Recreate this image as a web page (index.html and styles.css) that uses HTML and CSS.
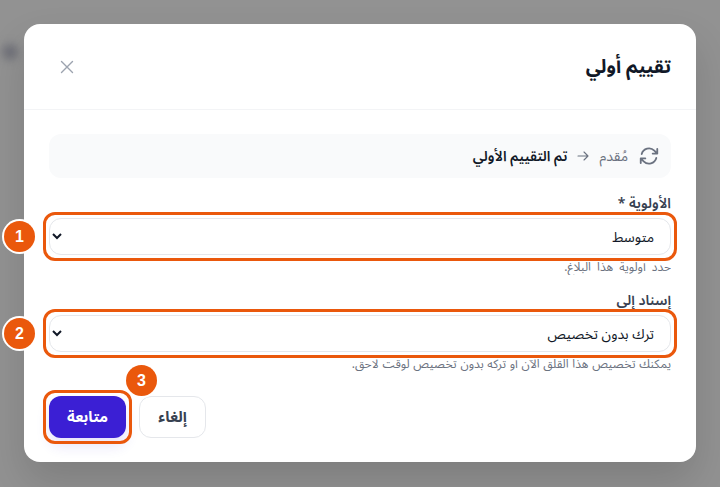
FILE: index.html
```html
<!DOCTYPE html>
<html lang="ar" dir="rtl">
<head>
<meta charset="utf-8">
<title>تقييم أولي</title>
<link rel="stylesheet" href="styles.css">
</head>
<body>
<div class="backdrop">
  <span class="blob"></span>
  <section class="modal">
    <header class="modal-head">
      <h2 class="title">تقييم أولي</h2>
      <button class="close" aria-label="إغلاق">
        <svg width="14" height="14" viewBox="0 0 14 14" fill="none" stroke="#9ca3af" stroke-width="1.4" stroke-linecap="round"><path d="M1.5 1.5l11 11M12.5 1.5l-11 11"/></svg>
      </button>
    </header>
    <div class="modal-body">
      <div class="steps">
        <svg class="refresh" width="22" height="22" viewBox="0 0 24 24" fill="none" stroke="#6b7280" stroke-width="2" stroke-linecap="round" stroke-linejoin="round"><path d="M16.023 9.348h4.992M2.985 19.644v-4.992m0 0h4.992m-4.993 0 3.181 3.183a8.25 8.25 0 0 0 13.803-3.7M4.031 9.865a8.25 8.25 0 0 1 13.803-3.7l3.181 3.182m0-4.991v4.99"/></svg>
        <span class="step-from">مُقدم</span>
        <svg class="arrow" width="12" height="12" viewBox="0 0 12 12" fill="none" stroke="#6b7280" stroke-width="1.1" stroke-linecap="round" stroke-linejoin="round"><path d="M1 6h10M7 2l4 4-4 4"/></svg>
        <span class="step-to">تم التقييم الأولي</span>
      </div>
      <div class="field">
        <label class="label">الأولوية *</label>
        <div class="ring ring-field">
          <select class="select"><option>متوسط</option></select>
          <span class="badge badge-side">1</span>
        </div>
        <p class="hint hint-wide">حدد أولوية هذا البلاغ.</p>
      </div>
      <div class="field">
        <label class="label">إسناد إلى</label>
        <div class="ring ring-field">
          <select class="select"><option>ترك بدون تخصيص</option></select>
          <span class="badge badge-side">2</span>
        </div>
        <p class="hint">يمكنك تخصيص هذا القلق الآن أو تركه بدون تخصيص لوقت لاحق.</p>
      </div>
      <div class="actions">
        <div class="ring ring-btn">
          <button class="btn-primary">متابعة</button>
          <span class="badge badge-top">3</span>
        </div>
        <button class="btn-cancel">إلغاء</button>
      </div>
    </div>
  </section>
</div>
</body>
</html>
```
FILE: styles.css
```css
* { box-sizing: border-box; }
html, body { margin: 0; height: 100%; }
body {
  font-family: "Noto Sans", "Noto Sans Arabic", "DejaVu Sans", sans-serif;
  overflow: hidden;
}
.backdrop {
  position: relative;
  width: 720px;
  height: 487px;
  padding: 24px;
  background: #929292;
  overflow: hidden;
}
.blob {
  position: absolute;
  left: 2px;
  top: 44px;
  width: 16px;
  height: 16px;
  border-radius: 50%;
  background: #6f7078;
  filter: blur(4px);
}
.modal {
  position: relative;
  width: 672px;
  height: 438px;
  background: #fff;
  border-radius: 16px;
  box-shadow: 0 20px 40px rgba(0, 0, 0, 0.14);
}
.modal-head {
  display: flex;
  align-items: center;
  justify-content: space-between;
  height: 86px;
  padding: 0 25px 0 36px;
  border-bottom: 1px solid #f3f4f6;
}
.title {
  margin: 0;
  font-size: 19px;
  font-weight: 700;
  color: #111827;
}
.close {
  display: flex;
  padding: 0;
  border: 0;
  background: none;
}
.modal-body {
  padding: 24px 25px 0;
}
.steps {
  display: flex;
  align-items: center;
  gap: 10px;
  height: 44px;
  padding: 0 11px;
  background: #f9fafb;
  border-radius: 12px;
  margin-bottom: 16px;
}
.step-from { font-size: 14px; color: #6b7280; }
.step-to { font-size: 14px; font-weight: 600; color: #111827; }
.field { margin-bottom: 16px; }
.label {
  display: block;
  height: 24px;
  font-size: 14px;
  line-height: 18px;
  font-weight: 600;
  color: #374151;
}
.ring {
  position: relative;
  outline: 3px solid #ea580c;
  border-radius: 6px;
}
.ring-field { outline-offset: 3px; }
.select {
  display: block;
  width: 100%;
  height: 37px;
  padding: 0 12px;
  font: inherit;
  font-size: 14px;
  color: #111827;
  background: #fff;
  border: 1px solid #e5e7eb;
  border-radius: 12px;
}
.hint {
  margin: 4px 0 0;
  font-size: 12px;
  line-height: 16px;
  color: #6b7280;
  word-spacing: 0.6px;
  clip-path: inset(3px 0 0 0);
}
.hint-wide { word-spacing: 3px; }
.actions {
  display: flex;
  gap: 13px;
  flex-direction: row-reverse;
  justify-content: flex-start;
  margin-top: 24px;
}
.ring-btn { outline-offset: 3px; width: 77px; }
.btn-primary {
  display: block;
  width: 77px;
  height: 42px;
  font: inherit;
  font-size: 15px;
  font-weight: 700;
  color: #fff;
  background: #3b1fd4;
  border: 0;
  border-radius: 12px;
  box-shadow: 0 8px 14px rgba(59, 31, 212, 0.12);
}
.btn-cancel {
  width: 67px;
  height: 42px;
  font: inherit;
  font-size: 15px;
  font-weight: 700;
  color: #374151;
  background: #fff;
  border: 1px solid #e5e7eb;
  border-radius: 12px;
}
.badge {
  position: absolute;
  display: flex;
  align-items: center;
  justify-content: center;
  width: 31px;
  height: 31px;
  font-family: "Liberation Sans", sans-serif;
  font-size: 16px;
  font-weight: 700;
  color: #fff;
  background: #ea580c;
  border-radius: 50%;
  box-shadow: 0 0 0 2px #fff;
}
.badge-side { left: -45px; top: 3px; }
.badge-top { left: 77px; top: -31px; }
```
